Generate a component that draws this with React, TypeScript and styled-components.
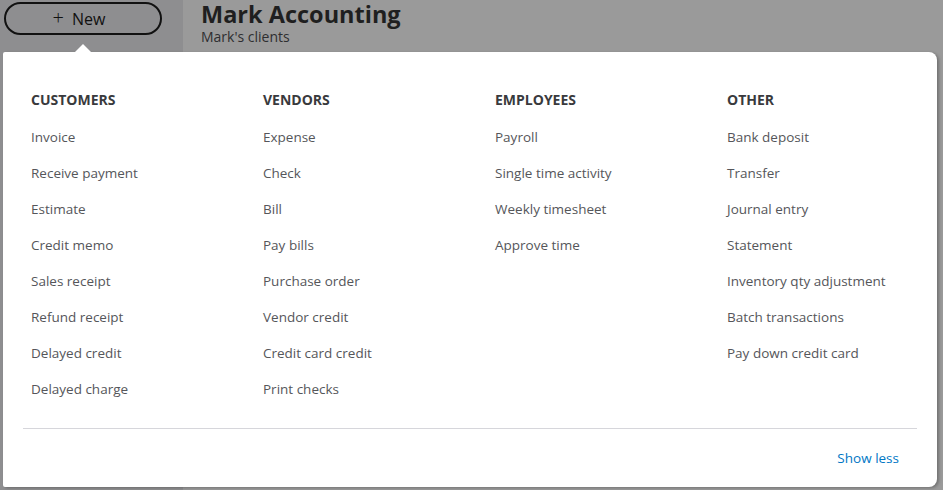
import styled, { createGlobalStyle } from "styled-components";

const GlobalStyle = createGlobalStyle`
  html, body {
    margin: 0;
    padding: 0;
    background: #9a9a9a;
    font-family: "Open Sans", "Liberation Sans", sans-serif;
    overflow: hidden;
  }
`;

const Page = styled.div`
  position: relative;
  display: grid;
  grid-template-columns: 183px 1fr;
  width: 943px;
  height: 490px;
`;

const Sidebar = styled.div`
  background: #8e8e90;
  padding: 2px 0 0 4px;
`;

const NewButton = styled.button`
  display: flex;
  align-items: center;
  justify-content: center;
  gap: 8px;
  width: 158px;
  height: 33px;
  box-sizing: border-box;
  border: 2px solid #111;
  border-radius: 17px;
  background: transparent;
  font-family: inherit;
  font-size: 16px;
  color: #111;
  padding: 0 8px 0 0;
`;

const Plus = styled.span`
  font-size: 20px;
  font-weight: 300;
  line-height: 1;
  margin-top: -2px;
`;

const Header = styled.div`
  padding: 2px 0 0 18px;
`;

const Title = styled.h1`
  margin: 0;
  font-size: 23.5px;
  font-weight: 700;
  line-height: 24px;
  color: #1f1f20;
`;

const Subtitle = styled.div`
  margin-top: 2px;
  font-size: 14px;
  line-height: 18px;
  color: #2e2e30;
`;

const Panel = styled.div`
  position: absolute;
  left: 3px;
  top: 52px;
  width: 934px;
  height: 435px;
  box-sizing: border-box;
  background: #fff;
  border-radius: 2px 8px 8px 2px;
  box-shadow: 2px 1px 3px rgba(0, 0, 0, 0.25);
  padding: 38px 20px 0;
  display: flex;
  flex-direction: column;

  &::before {
    content: "";
    position: absolute;
    top: -8px;
    left: 72px;
    border-left: 8px solid transparent;
    border-right: 8px solid transparent;
    border-bottom: 8px solid #fff;
  }
`;

const Columns = styled.div`
  display: grid;
  grid-template-columns: repeat(4, 232px);
  padding: 0 8px;
`;

const Column = styled.div`
  display: flex;
  flex-direction: column;
  gap: 16px;
`;

const Heading = styled.div`
  font-size: 14px;
  font-weight: 700;
  line-height: 20px;
  color: #393a3d;
  margin-bottom: 1px;
`;

const Item = styled.div`
  font-size: 13.5px;
  line-height: 20px;
  color: #55565a;
`;

const Divider = styled.hr`
  border: 0;
  border-top: 1px solid #d6d6db;
  margin: 29px 0 0;
`;

const Footer = styled.div`
  display: flex;
  justify-content: flex-end;
  align-items: center;
  height: 58px;
  padding-right: 18px;
`;

const ShowLess = styled.a`
  font-size: 13.5px;
  color: #0077c5;
  cursor: pointer;
`;

const groups: { title: string; items: string[] }[] = [
  {
    title: "CUSTOMERS",
    items: [
      "Invoice",
      "Receive payment",
      "Estimate",
      "Credit memo",
      "Sales receipt",
      "Refund receipt",
      "Delayed credit",
      "Delayed charge",
    ],
  },
  {
    title: "VENDORS",
    items: [
      "Expense",
      "Check",
      "Bill",
      "Pay bills",
      "Purchase order",
      "Vendor credit",
      "Credit card credit",
      "Print checks",
    ],
  },
  {
    title: "EMPLOYEES",
    items: ["Payroll", "Single time activity", "Weekly timesheet", "Approve time"],
  },
  {
    title: "OTHER",
    items: [
      "Bank deposit",
      "Transfer",
      "Journal entry",
      "Statement",
      "Inventory qty adjustment",
      "Batch transactions",
      "Pay down credit card",
    ],
  },
];

const App = () => {
  return (
    <>
      <GlobalStyle />
      <Page>
        <Sidebar>
          <NewButton>
            <Plus>+</Plus>
            New
          </NewButton>
        </Sidebar>
        <Header>
          <Title>Mark Accounting</Title>
          <Subtitle>Mark's clients</Subtitle>
        </Header>
        <Panel>
          <Columns>
            {groups.map((g) => (
              <Column key={g.title}>
                <Heading>{g.title}</Heading>
                {g.items.map((item) => (
                  <Item key={item}>{item}</Item>
                ))}
              </Column>
            ))}
          </Columns>
          <Divider />
          <Footer>
            <ShowLess>Show less</ShowLess>
          </Footer>
        </Panel>
      </Page>
    </>
  );
};

export default App;
